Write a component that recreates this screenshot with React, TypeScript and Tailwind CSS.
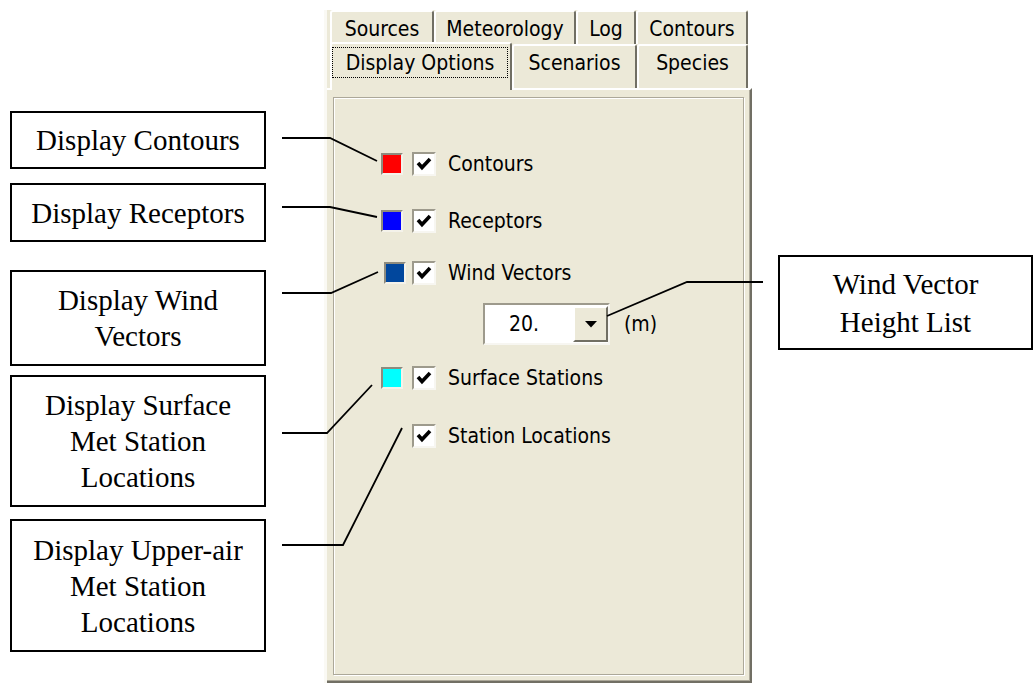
import React from "react";

const UI = "font-['DejaVu_Sans_Condensed','Liberation_Sans',sans-serif] text-[21px] text-black";
const SERIF = "font-['Liberation_Serif','Times_New_Roman',serif] text-[29px] leading-[36px] text-black";

function Callout({ lines, className }: { lines: string[]; className: string }) {
  return (
    <div className={`border-2 border-black bg-white flex flex-col items-center justify-center text-center ${SERIF} ${className}`}>
      {lines.map((l) => (
        <div key={l}>{l}</div>
      ))}
    </div>
  );
}

function Swatch({ color, className = "" }: { color: string; className?: string }) {
  return (
    <div
      className={`w-[22px] h-[22px] border-2 border-t-[#8E8B7E] border-l-[#8E8B7E] border-b-[#F4F2EA] border-r-[#F4F2EA] ${className}`}
      style={{ backgroundColor: color }}
    />
  );
}

function Check({ className = "" }: { className?: string }) {
  return (
    <div
      className={`w-[24px] h-[24px] bg-white border-2 border-t-[#9D9A8C] border-l-[#9D9A8C] border-b-[#F7F6F1] border-r-[#F7F6F1] flex items-center justify-center ${className}`}
    >
      <svg width="16" height="14" viewBox="0 0 16 14">
        <path d="M2 6 L6 10.5 L14 2" stroke="black" strokeWidth="3.6" fill="none" />
      </svg>
    </div>
  );
}

function Tab({ label, w, tall }: { label: string; w: string; tall?: boolean }) {
  return (
    <div
      className={`${w} ${tall ? "h-[44px] pt-[5px]" : "h-[34px] pt-[5px]"} shrink-0 bg-[#ECE9D8] border-t-2 border-l-2 border-t-white border-l-white border-r-2 border-r-[#716F64] rounded-t-[3px] flex justify-center leading-[24px]`}
    >
      {label}
    </div>
  );
}

function OptionRow({ color, label, swatchClass = "", checkClass = "ml-[9px]", className = "" }: { color?: string; label: string; swatchClass?: string; checkClass?: string; className?: string }) {
  return (
    <div className={`flex items-center h-[24px] ${className}`}>
      {color && <Swatch color={color} className={swatchClass} />}
      <Check className={checkClass} />
      <span className="ml-[12px] leading-[24px]">{label}</span>
    </div>
  );
}

export default function App() {
  return (
    <div className="relative w-[1036px] h-[683px] bg-white overflow-hidden flex items-start">
      {/* Callouts, left */}
      <div className="ml-[10px] w-[256px] flex flex-col">
        <Callout lines={["Display Contours"]} className="mt-[111px] h-[58px]" />
        <Callout lines={["Display Receptors"]} className="mt-[14px] h-[59px]" />
        <Callout lines={["Display Wind", "Vectors"]} className="mt-[28px] h-[96px]" />
        <Callout lines={["Display Surface", "Met Station", "Locations"]} className="mt-[9px] h-[132px]" />
        <Callout lines={["Display Upper-air", "Met Station", "Locations"]} className="mt-[12px] h-[133px]" />
      </div>

      {/* Dialog panel */}
      <div className={`ml-[58px] mt-[10px] w-[428px] h-[673px] flex flex-col border-l-[3px] border-l-[#FAF9F4] ${UI}`}>
        <div className="flex h-[34px] pl-[3px] mr-[4px] bg-[#ECE9D8]">
          <Tab label="Sources" w="w-[104px]" />
          <Tab label="Meteorology" w="w-[142px]" />
          <Tab label="Log" w="w-[60px]" />
          <Tab label="Contours" w="w-[112px]" />
        </div>
        <div className="flex h-[44px] items-start pl-[3px] mr-[4px] bg-[#ECE9D8]">
          <div className="relative z-10 -mt-[2px] w-[182px] h-[48px] shrink-0 bg-[#ECE9D8] border-t-2 border-l-2 border-t-white border-l-white border-r-2 border-r-[#716F64] rounded-t-[3px] pt-[3px]">
            <div className="w-[176px] h-[31px] border border-dotted border-black flex items-center justify-center leading-[24px]">
              Display Options
            </div>
          </div>
          <Tab label="Scenarios" w="w-[125px]" tall />
          <Tab label="Species" w="w-[111px]" tall />
        </div>

        <div className="flex-1 flex flex-col bg-[#ECE9D8] border-t-2 border-t-white border-r-2 border-r-[#716F64] border-b-2 border-b-[#716F64] shadow-[inset_-1px_-1px_0_#ACA899] pt-[7px] pl-[6px] pr-[6px] pb-[6px]">
          <div className="flex-1 flex flex-col border border-[#ACA899] shadow-[inset_1px_1px_0_#fff,1px_1px_0_#fff] pl-[47px] pt-[54px]">
            <OptionRow color="#FF0000" label="Contours" />
            <OptionRow color="#0000FF" label="Receptors" className="mt-[33px]" />
            <OptionRow color="#01479D" label="Wind Vectors" swatchClass="ml-[3px]" checkClass="ml-[6px]" className="mt-[28px]" />

            <div className="mt-[18px] ml-[102px] flex items-center">
              <div className="w-[127px] h-[42px] bg-white border-2 border-t-[#9D9A8C] border-l-[#9D9A8C] border-b-[#F7F6F1] border-r-[#F7F6F1] flex items-center">
                <span className="flex-1 pl-[24px] leading-[24px]">20.</span>
                <div className="w-[35px] h-[36px] bg-[#ECE9D8] border-2 border-t-white border-l-white border-b-[#716F64] border-r-[#716F64] flex items-center justify-center">
                  <svg width="12" height="7" viewBox="0 0 12 7">
                    <path d="M0 0 H12 L6 6.5 Z" fill="black" />
                  </svg>
                </div>
              </div>
              <span className="ml-[14px] leading-[24px]">(m)</span>
            </div>

            <OptionRow color="#00FFFF" label="Surface Stations" className="mt-[21px]" />
            <OptionRow label="Station Locations" checkClass="ml-[31px]" className="mt-[34px]" />
          </div>
        </div>
      </div>

      {/* Callout, right */}
      <Callout lines={["Wind Vector", "Height List"]} className="ml-[26px] mt-[255px] w-[255px] h-[95px] leading-[38px]" />

      {/* Leader lines */}
      <svg className="absolute inset-0 pointer-events-none" width="1036" height="683" viewBox="0 0 1036 683">
        <g stroke="black" strokeWidth="1.8" fill="none">
          <path d="M282 138 H330 L377 161" />
          <path d="M282 207 H330 L377 217" />
          <path d="M282 293 H331 L378 272" />
          <path d="M282 433 H327 L372 385" />
          <path d="M282 545 H343 L402 428" />
          <path d="M763 282 H687 L607 316" />
        </g>
      </svg>
    </div>
  );
}
